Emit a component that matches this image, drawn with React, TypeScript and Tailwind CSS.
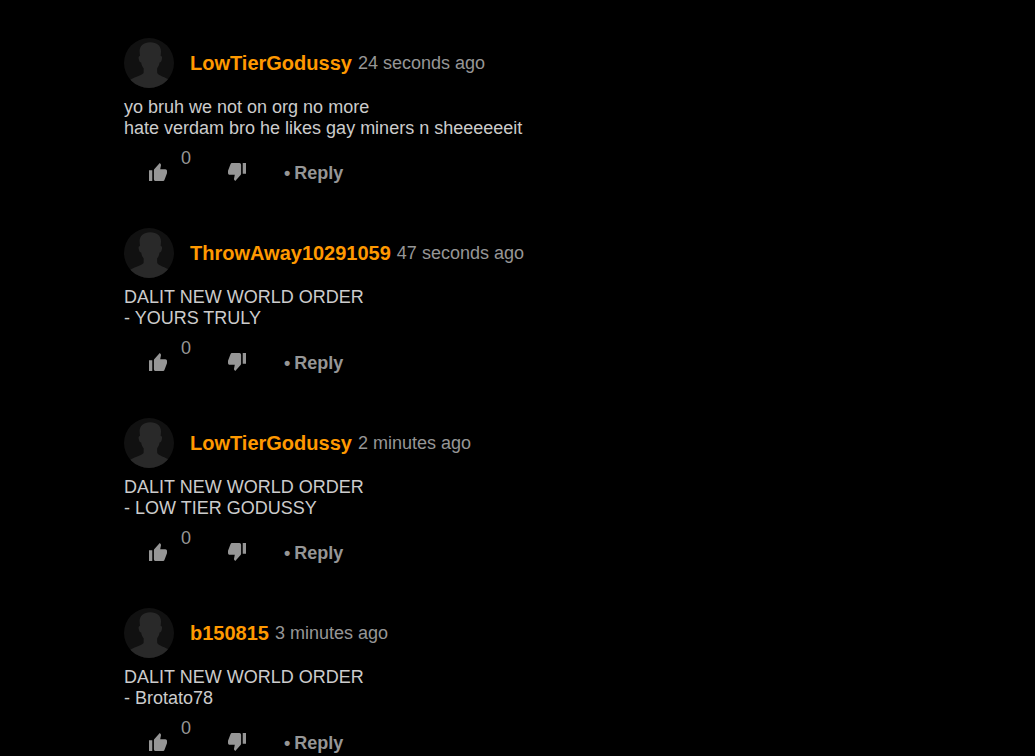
import React from "react";

interface IComment {
  id: number;
  author: string;
  time: string;
  lines: string[];
  likes: number;
}

const comments: IComment[] = [
  {
    id: 1,
    author: "LowTierGodussy",
    time: "24 seconds ago",
    lines: [
      "yo bruh we not on org no more",
      "hate verdam bro he likes gay miners n sheeeeeeit",
    ],
    likes: 0,
  },
  {
    id: 2,
    author: "ThrowAway10291059",
    time: "47 seconds ago",
    lines: ["DALIT NEW WORLD ORDER", "- YOURS TRULY"],
    likes: 0,
  },
  {
    id: 3,
    author: "LowTierGodussy",
    time: "2 minutes ago",
    lines: ["DALIT NEW WORLD ORDER", "- LOW TIER GODUSSY"],
    likes: 0,
  },
  {
    id: 4,
    author: "b150815",
    time: "3 minutes ago",
    lines: ["DALIT NEW WORLD ORDER", "- Brotato78"],
    likes: 0,
  },
];

const Avatar: React.FC = () => (
  <svg
    className="h-[50px] w-[50px] shrink-0 rounded-full bg-[#111111]"
    viewBox="0 0 50 50"
    fill="#292929"
    aria-hidden="true"
  >
    <path d="M26.300 4.300C19.500 4.300 15.600 8 15.600 13.500L16 18C14.500 18 14.400 19.800 14.900 21.600C15.300 23.500 15.900 24.600 17.100 24.600C17.600 27 18.300 28.800 19.700 30.500L19.600 35C18 37.500 12 38.200 6.500 41.500L6 50H45L44 41C39 38.500 34.700 37.500 33.200 35L33.100 30.500C34.400 28.800 35.200 27 35.600 24.600C36.800 24.600 37.400 23.500 37.800 21.600C38.300 19.800 38.100 18 36.700 18L37 13.500C37 8 33 4.300 26.300 4.300Z" />
  </svg>
);

const ThumbUp: React.FC = () => (
  <svg
    className="h-[18px] w-[18px]"
    viewBox="1 1 22 20"
    preserveAspectRatio="none"
    fill="currentColor"
    aria-hidden="true"
  >
    <path d="M1 21h4V9H1v12zm22-11c0-1.100-.9-2-2-2h-6.310l.95-4.570.03-.32c0-.41-.17-.79-.44-1.060L14.170 1 7.590 7.590C7.220 7.950 7 8.450 7 9v10c0 1.100.9 2 2 2h9c.83 0 1.540-.5 1.840-1.220l3.020-7.050c.09-.23.14-.47.14-.73v-2z" />
  </svg>
);

const ThumbDown: React.FC = () => (
  <svg
    className="h-[18px] w-[18px]"
    viewBox="1 3 22 20"
    preserveAspectRatio="none"
    fill="currentColor"
    aria-hidden="true"
  >
    <path d="M15 3H6c-.83 0-1.540.5-1.840 1.220l-3.020 7.050c-.09.23-.14.47-.14.73v2c0 1.100.9 2 2 2h6.310l-.95 4.570-.03.32c0 .41.17.79.44 1.060L9.830 23l6.590-6.590c.36-.36.58-.86.58-1.410V5c0-1.100-.9-2-2-2zm4 0v12h4V3h-4z" />
  </svg>
);

const Comment: React.FC<{ comment: IComment }> = ({ comment }) => (
  <article>
    <header className="flex items-center">
      <Avatar />
      <a href="#" className="ml-4 text-xl font-bold text-[#ff9900]">
        {comment.author}
      </a>
      <span className="ml-1.5 text-[#969696]">{comment.time}</span>
    </header>
    <p className="mt-[9px] text-[#cccccc]">
      {comment.lines.map((line) => (
        <span key={line} className="block">
          {line}
        </span>
      ))}
    </p>
    <div className="mt-[9px] flex items-start pl-[25px] text-[#969696]">
      <button type="button" aria-label="Like" className="mt-[15px]">
        <ThumbUp />
      </button>
      <span className="ml-3.5">{comment.likes}</span>
      <button
        type="button"
        aria-label="Dislike"
        className="mt-[15px] ml-[37px]"
      >
        <ThumbDown />
      </button>
      <span className="mt-[15px] ml-[38px] font-bold">•</span>
      <button type="button" className="mt-[15px] ml-1 font-bold">
        Reply
      </button>
    </div>
  </article>
);

const App: React.FC = () => {
  return (
    <main className="min-h-screen bg-black pt-[38px] pr-6 pl-[124px] font-['Liberation_Sans',Arial,sans-serif] text-lg leading-[21px]">
      <div className="flex flex-col gap-11">
        {comments.map((comment) => (
          <Comment key={comment.id} comment={comment} />
        ))}
      </div>
    </main>
  );
};

export default App;
